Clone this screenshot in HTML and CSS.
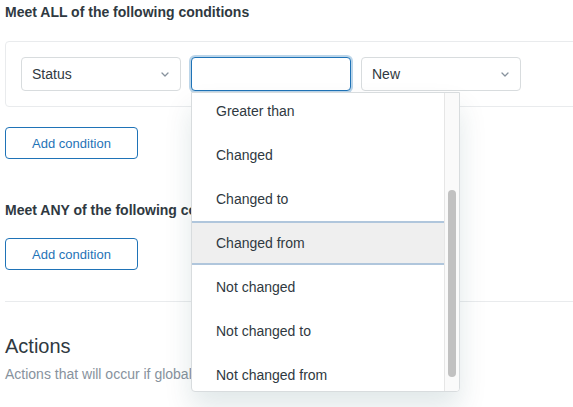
FILE: index.html
```html
<!DOCTYPE html>
<html lang="en">
<head>
<meta charset="utf-8">
<title>Conditions</title>
<link rel="stylesheet" href="styles.css">
</head>
<body>
<main class="page">
  <section class="group">
    <h3 class="group-title">Meet ALL of the following conditions</h3>
    <div class="condition-box">
      <div class="condition-row">
        <div class="select">
          <span class="select-value">Status</span>
          <svg class="chevron" width="8" height="5" viewBox="0 0 8 5"><polyline points="1,1 4,4 7,1" fill="none" stroke="#87929d" stroke-width="1.3" stroke-linecap="round" stroke-linejoin="round"/></svg>
        </div>
        <div class="combo">
          <div class="input is-focused"></div>
          <div class="menu">
            <ul class="menu-list">
              <li class="menu-item">Greater than</li>
              <li class="menu-item">Changed</li>
              <li class="menu-item">Changed to</li>
              <li class="menu-item is-active">Changed from</li>
              <li class="menu-item">Not changed</li>
              <li class="menu-item">Not changed to</li>
              <li class="menu-item">Not changed from</li>
            </ul>
            <div class="scroll-track"><div class="scroll-thumb"></div></div>
          </div>
        </div>
        <div class="select">
          <span class="select-value">New</span>
          <svg class="chevron" width="8" height="5" viewBox="0 0 8 5"><polyline points="1,1 4,4 7,1" fill="none" stroke="#87929d" stroke-width="1.3" stroke-linecap="round" stroke-linejoin="round"/></svg>
        </div>
      </div>
    </div>
    <button class="btn">Add condition</button>
  </section>

  <section class="group group-any">
    <h3 class="group-title">Meet ANY of the following conditions</h3>
    <button class="btn btn-any">Add condition</button>
  </section>

  <hr class="divider">

  <section class="actions">
    <h2 class="actions-title">Actions</h2>
    <p class="actions-hint">Actions that will occur if global conditions are met</p>
  </section>
</main>
</body>
</html>
```

FILE: styles.css
```css
html, body {
  margin: 0;
  padding: 0;
}
body {
  width: 573px;
  height: 407px;
  overflow: hidden;
  background: #fff;
  font-family: "Liberation Sans", Arial, sans-serif;
  color: #2f3941;
}
.page {
  padding: 2px 0 0 5px;
}
.group-title {
  margin: 0;
  font-size: 14px;
  line-height: 20px;
  font-weight: 700;
  white-space: nowrap;
}
.condition-box {
  margin-top: 19px;
  width: 620px;
  border: 1px solid #e9ebed;
  border-radius: 4px;
  padding: 15px;
  box-sizing: border-box;
}
.condition-row {
  display: flex;
  gap: 10px;
}
.select, .input {
  width: 160px;
  height: 34px;
  box-sizing: border-box;
  border: 1px solid #d8dcde;
  border-radius: 4px;
  background: #fff;
}
.select {
  display: flex;
  align-items: center;
  justify-content: space-between;
  padding: 0 11px 0 10px;
  font-size: 14px;
}
.chevron {
  display: block;
}
.combo {
  position: relative;
  width: 160px;
}
.input.is-focused {
  border-color: #1f73b7;
  box-shadow: 0 0 0 2px rgba(31, 115, 183, 0.3);
}
.menu {
  position: absolute;
  top: 35px;
  left: 0;
  width: 269px;
  height: 300px;
  box-sizing: border-box;
  border: 1px solid #d8dcde;
  border-radius: 0 0 4px 4px;
  background: #fff;
  box-shadow: 0 16px 28px rgba(4, 68, 77, 0.12);
  display: flex;
  overflow: hidden;
  z-index: 10;
}
.menu-list {
  list-style: none;
  margin: -4px 0 0 0;
  padding: 0;
  flex: 1;
}
.menu-item {
  height: 44px;
  line-height: 44px;
  padding-left: 24px;
  font-size: 14px;
  color: #2f3941;
  box-sizing: border-box;
  white-space: nowrap;
}
.menu-item.is-active {
  background: #efefef;
  border-top: 2px solid #b0c6dc;
  border-bottom: 2px solid #b0c6dc;
  line-height: 40px;
}
.scroll-track {
  width: 15px;
  border-left: 1px solid #e6e6e6;
  background: #fafafa;
  box-sizing: border-box;
  padding: 97px 0 0 3px;
}
.scroll-thumb {
  width: 8px;
  height: 187px;
  border-radius: 4px;
  background: #c1c1c1;
}
.btn {
  display: block;
  margin-top: 20px;
  width: 133px;
  height: 32px;
  border: 1px solid #1f73b7;
  border-radius: 4px;
  background: #fff;
  color: #1f73b7;
  font-family: "Liberation Sans", Arial, sans-serif;
  font-size: 13px;
  padding: 0;
  cursor: pointer;
}
.group-any {
  margin-top: 41px;
}
.btn-any {
  margin-top: 18px;
}
.divider {
  margin: 31px 0 0 0;
  border: 0;
  border-top: 1px solid #e9ebed;
  height: 0;
}
.actions {
  padding-top: 32px;
}
.actions-title {
  margin: 0;
  font-size: 20px;
  line-height: 24px;
  font-weight: 400;
}
.actions-hint {
  margin: 6px 0 0 0;
  font-size: 14px;
  line-height: 20px;
  color: #87929d;
  white-space: nowrap;
}
```
